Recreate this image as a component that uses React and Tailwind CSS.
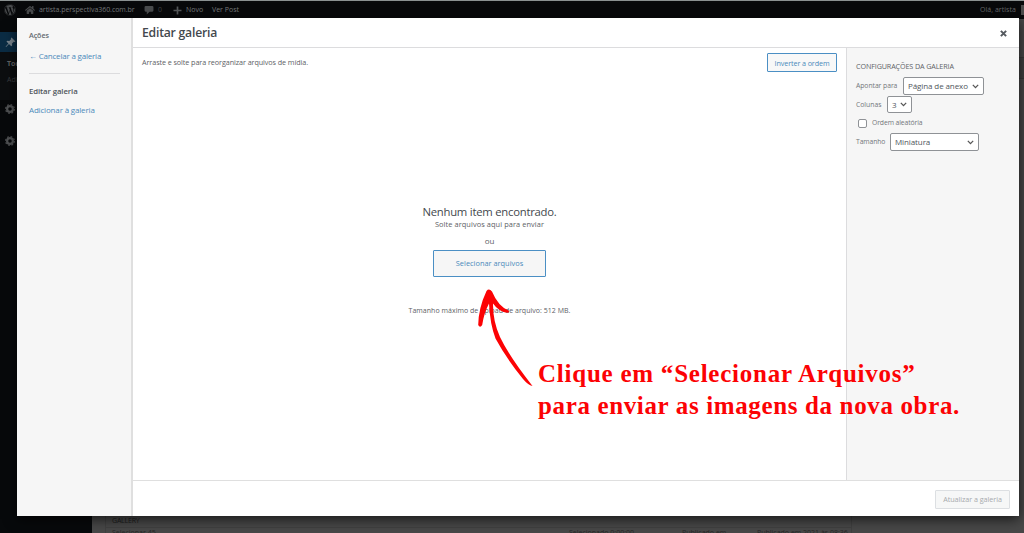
import React from "react";
import { FaWordpress, FaHome } from "react-icons/fa";

const AdminBar = () => (
  <div className="flex h-[19px] items-center border-t border-[#8b9191] bg-[#08090b] text-[7px] leading-[18px] text-[#66686a]">
    <FaWordpress className="ml-[4px] size-[12px] text-[#4a4c4e]" />
    <FaHome className="ml-[9px] size-[10px] text-[#4a4c4e]" />
    <span className="ml-[4px] w-[105px] tracking-[-0.05px] text-[#77797b]">
      artista.perspectiva360.com.br
    </span>
    <svg viewBox="0 0 9 9" className="size-[10px]" fill="#4a4c4e">
      <path d="M1.500 1h6q1 0 1 1v3q0 1-1 1H5L2.500 8.500V6h-1q-1 0-1-1V2q0-1 1-1z" />
    </svg>
    <span className="ml-[4px] w-[15px] text-[#3f4143]">0</span>
    <svg viewBox="0 0 9 9" className="size-[9px]" stroke="#55585a" strokeWidth="1.700">
      <path d="M4.500 0.500v8M0.500 4.500h8" />
    </svg>
    <span className="ml-[4px] w-[26px] text-[#77797b]">Novo</span>
    <span className="text-[#77797b]">Ver Post</span>
    <span className="mr-[5px] ml-auto tracking-[0.05px]">Olá, artista</span>
    <span className="h-[10px] w-[3px] bg-[#4c4c4c]" />
  </div>
);

const AdminMenu = () => (
  <div className="w-[92px] bg-[#07090b] pt-[13px] text-[7px] leading-[10px] text-[#595b5d]">
    <div className="flex h-[20px] items-center bg-[#0b2c44] pl-[5px]">
      <svg viewBox="0 0 10 10" className="size-[11px]" fill="#7a868f">
        <path d="M6 .5 9.500 4l-.8.6-.7-.2-1.600 1.600.1 1.700-.8.8L3.600 6.400 1 9.200l-.5-.4L3.100 5.800 1.300 4.200l.8-.8 1.800.2L5.500 2 5.300 1.200z" />
      </svg>
    </div>
    <div className="h-[48px] bg-[#0c0e10] pt-[7px] pl-[7px]">
      <p className="font-bold text-[#626466]">Todos</p>
      <p className="mt-[6px] text-[#3b3d3f]">Adicionar</p>
    </div>
    <div className="flex flex-col gap-[22px] pt-[4px] pl-[5px]">
      {[0, 1].map((item) => (
        <svg key={item} viewBox="0 0 9 9" className="size-[10px]" fill="none" stroke="#505254">
          <circle cx="4.500" cy="4.500" r="2.600" strokeWidth="2" />
          <circle cx="4.500" cy="4.500" r="4" strokeDasharray="1.600 1.540" />
        </svg>
      ))}
    </div>
  </div>
);

const PageContent = () => (
  <div className="flex flex-1 bg-[#484848]">
    <div className="mt-auto ml-[13px] h-[18px] w-[747px] border-x border-[#404040] text-[7px] leading-[10px] text-[#1c1c1c]">
      <p className="h-[13px] border-b border-[#414141] pt-px pl-[6px] tracking-[-0.2px]">
        GALLERY
      </p>
      <div className="flex h-[5px] pl-[6px] whitespace-nowrap text-[#262626]">
        <span className="flex-1">Selecionar 45</span>
        <span className="w-[113px]">Selecionado 0:00:00</span>
        <span className="w-[75px]">Publicado em</span>
        <span className="w-[94px]">Publicado em 2021 às 08:36</span>
      </div>
    </div>
    <div className="mt-[38px] ml-auto h-[22px] w-[6px] border-y border-[#383838] bg-[#404040]" />
  </div>
);

const Select = ({ value, className }) => (
  <div
    className={`flex items-center justify-between rounded-[2px] border border-[#8f9296] bg-white pr-[4px] pl-[4px] text-[8px] text-[#50565c] ${className}`}
  >
    <span className="tracking-[-0.1px] whitespace-nowrap">{value}</span>
    <svg viewBox="0 0 8 6" className="h-[5px] w-[7px] shrink-0" fill="none" stroke="#555" strokeWidth="1.500">
      <path d="M.8 1 4 4.400 7.200 1" />
    </svg>
  </div>
);

const Sidebar = () => (
  <div className="w-[116px] shrink-0 border-r-2 border-[#dfdfdf] bg-[#f6f6f6] pt-[12px] pr-[11px] pl-[12px] leading-[10px]">
    <h2 className="text-[7.200px] font-semibold tracking-[-0.1px] text-[#646a70]">Ações</h2>
    <p className="mt-[11px] text-[8px] tracking-[-0.2px] text-[#4b8abb]">← Cancelar a galeria</p>
    <div className="mt-[12px] border-t border-[#dcdcde]" />
    <p className="mt-[12px] text-[7.800px] font-semibold tracking-[-0.1px] text-[#4f555b]">
      Editar galeria
    </p>
    <p className="mt-[9px] text-[8px] tracking-[-0.17px] text-[#4b8abb]">Adicionar à galeria</p>
  </div>
);

const Uploader = () => (
  <div className="flex flex-1 flex-col pt-[5px] text-[7.200px] text-[#5d6166]">
    <div className="flex justify-between pr-[9px] pl-[9px]">
      <p className="leading-[19px] tracking-[-0.07px]">
        Arraste e solte para reorganizar arquivos de mídia.
      </p>
      <button className="h-[19px] w-[70px] rounded-[1px] border border-[#4b8fc4] bg-[#f8f8f8] pt-px text-[7.200px] tracking-[-0.1px] text-[#4b8abb]">
        Inverter a ordem
      </button>
    </div>
    <div className="flex flex-col items-center pt-[132px]">
      <h2 className="text-[11.300px] leading-[15px] tracking-[-0.24px] text-[#43484d]">
        Nenhum item encontrado.
      </h2>
      <p className="text-[7.400px] leading-[11px] tracking-[0.08px]">
        Solte arquivos aqui para enviar
      </p>
      <p className="mt-[5px] text-[8px] leading-[11px]">ou</p>
      <button className="mt-[4px] h-[27px] w-[113px] rounded-[1px] border border-[#4b8fc4] bg-[#f6f6f6] pt-px text-[7.400px] text-[#4b8abb]">
        Selecionar arquivos
      </button>
      <p className="mt-[29px] text-[7px] leading-[10px] tracking-[0.03px]">
        Tamanho máximo de upload de arquivo: 512 MB.
      </p>
    </div>
  </div>
);

const Settings = () => (
  <div className="w-[173px] shrink-0 border-l border-[#dcdcde] bg-[#f6f6f6] pt-[13px] pl-[9px] text-[6.800px] text-[#73777b]">
    <h2 className="text-[7.200px] leading-[10px] tracking-[-0.12px] text-[#5f6368]">
      CONFIGURAÇÕES DA GALERIA
    </h2>
    <div className="mt-[6px] flex items-center">
      <span className="w-[47px] pt-px tracking-[-0.05px]">Apontar para</span>
      <Select value="Página de anexo" className="h-[18px] w-[81px]" />
    </div>
    <div className="mt-px flex items-center">
      <span className="w-[31px] pt-px">Colunas</span>
      <Select value="3" className="h-[17px] w-[25px]" />
    </div>
    <div className="mt-[5px] flex h-[10px] items-center">
      <span className="ml-[2px] size-[9px] rounded-[2px] border border-[#8f9296] bg-white" />
      <span className="ml-[5px] pt-px tracking-[-0.1px]">Ordem aleatória</span>
    </div>
    <div className="mt-[5px] flex items-center">
      <span className="w-[34px] pt-px tracking-[-0.1px]">Tamanho</span>
      <Select value="Miniatura" className="h-[18px] w-[89px]" />
    </div>
  </div>
);

const GalleryModal = () => (
  <div className="absolute top-[18px] left-[17px] flex h-[498px] w-[1002px] bg-white shadow-[0_3px_12px_rgba(0,0,0,0.7)]">
    <Sidebar />
    <div className="flex flex-1 flex-col">
      <div className="flex h-[30px] items-center justify-between border-b border-[#dcdcde] pt-[2px] pr-[12px] pl-[9px]">
        <h1 className="text-[12.200px] font-semibold tracking-[-0.22px] text-[#43484d]">
          Editar galeria
        </h1>
        <svg viewBox="0 0 8 8" className="size-[7px]" stroke="#555a5f" strokeWidth="2.300">
          <path d="M1 1l6 6M7 1 1 7" />
        </svg>
      </div>
      <div className="flex flex-1">
        <Uploader />
        <Settings />
      </div>
      <div className="flex h-[36px] items-center justify-end border-t border-[#dfdfdf] pt-[2px] pr-[9px]">
        <button className="h-[19px] w-[75px] rounded-[1px] border border-[#dcdfe2] bg-[#f6f7f7] text-[7.200px] tracking-[-0.05px] text-[#a7aaad]">
          Atualizar a galeria
        </button>
      </div>
    </div>
  </div>
);

// Handwritten arrow and note on top of the dialog
const Annotation = () => (
  <>
    <svg
      className="absolute top-[284px] left-[474px]"
      width="64"
      height="106"
      viewBox="474 284 64 106"
      fill="#fc0204"
    >
      <path d="M478.200 325Q478.500 308 486.500 291Q489 288 492 291.500Q498 306 508.500 310.500Q510 312.500 507.500 312.800Q499 312 493 303.500Q492.800 321 500 337Q509 356 532.500 386Q528 385 523 379Q506 358 495.500 338.500Q490 324 489 303.500Q484 313 482.200 325Q480 328.500 478.200 325Z" />
    </svg>
    <div className="absolute top-[358px] left-[538px] font-['Liberation_Serif',serif] text-[25px] leading-[31.500px] font-bold whitespace-nowrap text-[#fc0204]">
      <p className="tracking-[0.76px]">Clique em “Selecionar Arquivos”</p>
      <p className="tracking-[0.64px]">para enviar as imagens da nova obra.</p>
    </div>
  </>
);

const App = () => {
  return (
    <div className="relative flex h-screen w-full flex-col overflow-hidden font-['Open_Sans',sans-serif]">
      <AdminBar />
      <div className="flex flex-1">
        <AdminMenu />
        <PageContent />
      </div>
      <GalleryModal />
      <Annotation />
    </div>
  );
};

export default App;
